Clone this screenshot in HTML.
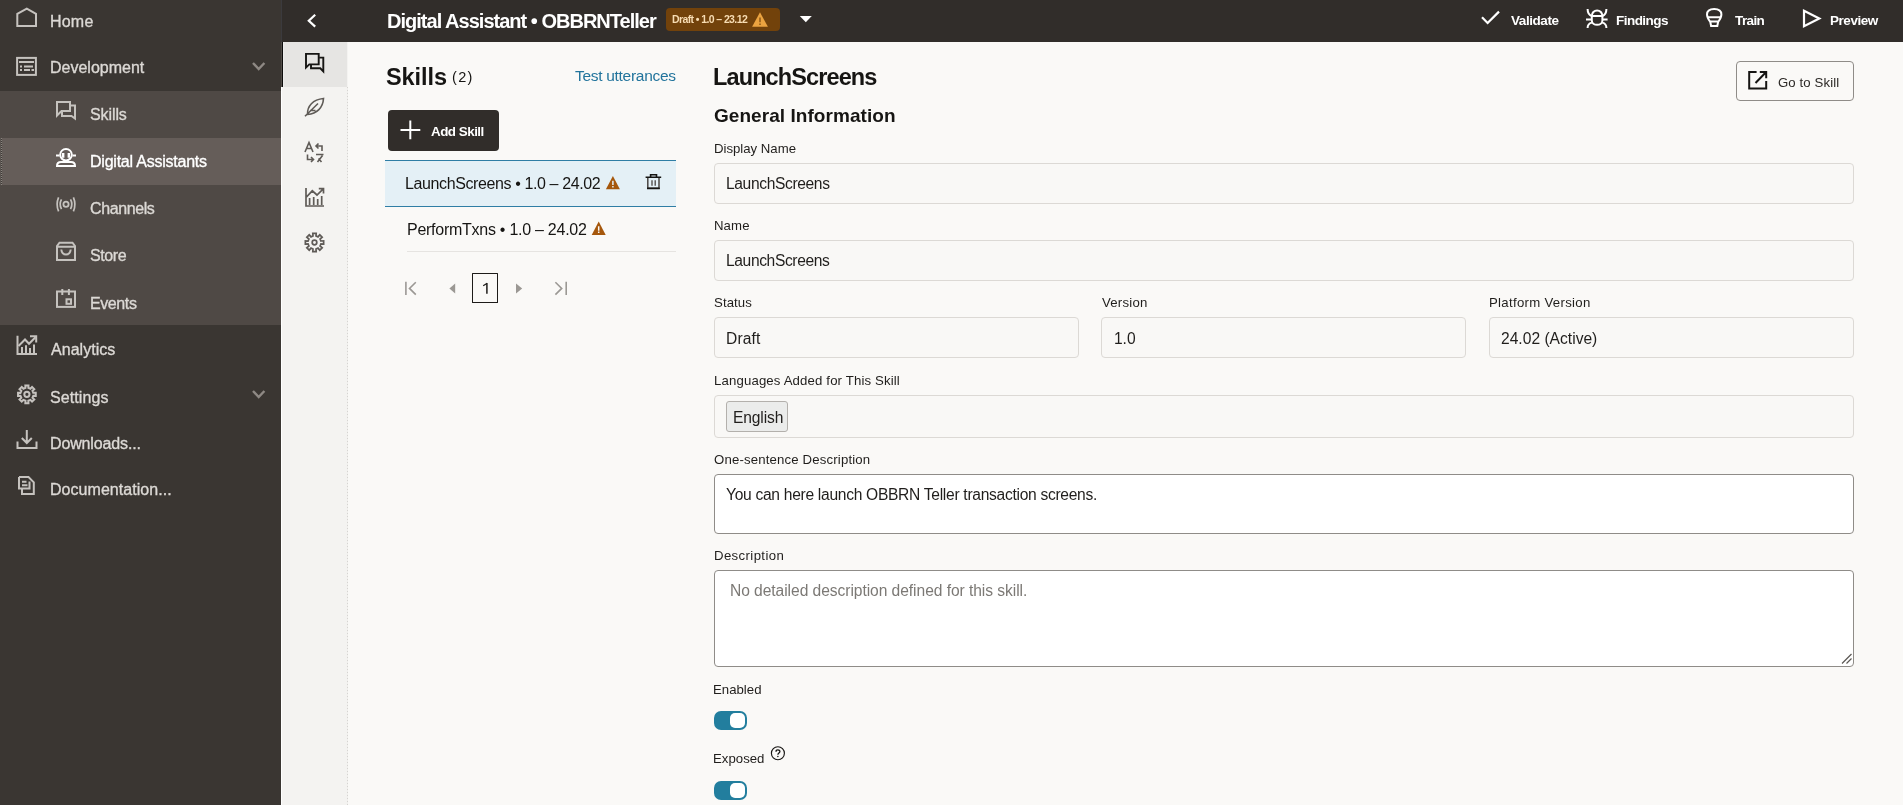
<!DOCTYPE html>
<html><head><meta charset="utf-8"><title>Digital Assistant</title><style>
*{box-sizing:border-box;margin:0;padding:0}
html,body{width:1903px;height:805px;overflow:hidden;background:#faf9f7;font-family:"Liberation Sans",sans-serif}
.b{position:absolute}
.t{position:absolute;line-height:1;white-space:nowrap;font-family:"Liberation Sans",sans-serif;will-change:transform}
.inp{position:absolute;border:1px solid #dcd9d5;border-radius:4px;background:#f9f8f6}
.ta{position:absolute;border:1px solid #8f8c88;border-radius:4px;background:#ffffff}
.tog{position:absolute;width:33px;height:19px;border-radius:7px;background:#227e9e}
.tog i{position:absolute;left:16.2px;top:2.2px;width:15.2px;height:15.2px;border-radius:5px;background:#fff}
</style></head>
<body>

<div class="b" style="left:0;top:0;width:281px;height:805px;background:#3a3632"></div>
<div class="b" style="left:0;top:91px;width:281px;height:234px;background:#4f4945"></div>
<div class="b" style="left:0;top:138px;width:281px;height:47px;background:#655d59"></div><div class="b" style="left:0;top:138px;width:1px;height:47px;background:#5a5450"></div><div class="b" style="left:1px;top:138px;width:1px;height:47px;background:repeating-linear-gradient(to bottom,#8a8580 0 1px,#3e3a36 1px 2px)"></div>
<div class="b" style="left:281px;top:0;width:1622px;height:42px;background:#312d2a"></div>
<div class="b" style="left:281px;top:0;width:1px;height:42px;background:#3b3a3d"></div>
<div class="b" style="left:281px;top:42px;width:67px;height:763px;background:#f4f3f1;border-left:1px solid #ffffff"></div><div class="b" style="left:347px;top:87px;width:1px;height:718px;background:repeating-linear-gradient(to bottom,#d6d4d1 0 1px,#efeeec 1px 3px)"></div>
<div class="b" style="left:281px;top:42px;width:66px;height:45px;background:#e6e5e3;border-left:1px solid #524d49"></div><div class="b" style="left:282px;top:42px;width:1px;height:45px;background:#0e0d0c"></div><div class="b" style="left:283px;top:42px;width:1px;height:45px;background:#ececeb"></div>
<div class="b" style="left:388px;top:110px;width:111px;height:41px;background:#312d2a;border-radius:4px"></div>
<div class="b" style="left:385px;top:160px;width:291px;height:47px;background:#e4f0f6;border-top:1px solid #2f7ea5;border-bottom:1px solid #2f7ea5"></div>
<div class="b" style="left:407px;top:251px;width:269px;height:1px;background:#e6e4e1"></div>
<div class="b" style="left:472px;top:273px;width:26px;height:30px;border:1.3px solid #1d1b19;border-radius:0.5px"></div>
<div class="b" style="left:666px;top:8px;width:114px;height:23px;background:#72420b;border-radius:4px"></div>
<div class="b" style="left:1736px;top:61px;width:118px;height:40px;border:1px solid #8f8c88;border-radius:4px"></div>
<div class="inp" style="left:714px;top:163px;width:1140px;height:41px"></div>
<div class="inp" style="left:714px;top:240px;width:1140px;height:41px"></div>
<div class="inp" style="left:714px;top:317px;width:365px;height:41px"></div>
<div class="inp" style="left:1101px;top:317px;width:365px;height:41px"></div>
<div class="inp" style="left:1489px;top:317px;width:365px;height:41px"></div>
<div class="inp" style="left:714px;top:395px;width:1140px;height:43px"></div>
<div class="b" style="left:726px;top:401px;width:62px;height:31px;background:#ebeceb;border:1px solid #b3b0ac;border-radius:3px"></div>
<div class="ta" style="left:714px;top:474px;width:1140px;height:60px"></div>
<div class="ta" style="left:714px;top:570px;width:1140px;height:97px"></div>
<div class="tog" style="left:714px;top:710.5px"><i></i></div>
<div class="tog" style="left:714px;top:780.8px"><i></i></div>

<svg style="position:absolute;left:10px;top:3px;width:32px;height:30px;overflow:visible" viewBox="10 3 32 30"><path fill="none" stroke="#c5c2be" stroke-width="2" d="M17.3 26 V13.8 L26.8 8.6 L36 13.8 V26 Z" stroke-linejoin="miter"/></svg>
<svg style="position:absolute;left:10px;top:50px;width:32px;height:32px;overflow:visible" viewBox="10 50 32 32"><rect fill="none" stroke="#c5c2be" stroke-width="2" x="17.1" y="57.9" width="18.8" height="17"/><path fill="none" stroke="#c5c2be" stroke-width="2" d="M19 62 H34"/><path fill="none" stroke="#c5c2be" stroke-width="2" d="M20 66.5 H22 M24 66.5 H33 M20 70 H22 M24 70 H30 M31.5 70 H34"/></svg>
<svg style="position:absolute;left:50px;top:95px;width:32px;height:32px;overflow:visible" viewBox="50 95 32 32"><path fill="none" stroke="#c5c2be" stroke-width="2" d="M57 102 H70 V111 H61.5 L57 115.5 Z"/><path fill="none" stroke="#c5c2be" stroke-width="2" d="M70.5 105.5 H75 V118.5 L71.5 116 H62 V111.5"/></svg>
<svg style="position:absolute;left:50px;top:140px;width:32px;height:32px;overflow:visible" viewBox="50 140 32 32"><circle fill="none" stroke="#ffffff" stroke-width="2" cx="66" cy="154.7" r="5.8"/><path fill="none" stroke="#ffffff" stroke-width="2" d="M56 155.5 H59.5 M72.5 155.5 H76"/><path stroke="#ffffff" stroke-width="2.4" d="M63.2 152.9 V157.7 M68.8 152.9 V157.7"/><path fill="none" stroke="#ffffff" stroke-width="2" d="M57 166 C57 162.5 59 162 61 162 H71 C73 162 75 162.5 75 166 Z"/></svg>
<svg style="position:absolute;left:50px;top:190px;width:32px;height:30px;overflow:visible" viewBox="50 190 32 30"><circle fill="none" stroke="#c5c2be" stroke-width="1.8" cx="66" cy="204.3" r="2.6"/><path fill="none" stroke="#c5c2be" stroke-width="1.7" d="M61.5 199.4 Q58.8 204.3 61.5 209.2 M70.5 199.4 Q73.2 204.3 70.5 209.2 M58.6 197.3 Q55.6 204.3 58.6 211.3 M73.4 197.3 Q76.4 204.3 73.4 211.3"/></svg>
<svg style="position:absolute;left:50px;top:237px;width:32px;height:30px;overflow:visible" viewBox="50 237 32 30"><path fill="none" stroke="#c5c2be" stroke-width="2" d="M57 246.8 H75 M57 260 V246 L59.5 242.7 H72.5 L75 246 V260 Z"/><path fill="none" stroke="#c5c2be" stroke-width="2" d="M61.3 249.5 Q61.8 254.5 66 254.5 Q70.2 254.5 70.7 249.5"/></svg>
<svg style="position:absolute;left:50px;top:284px;width:32px;height:30px;overflow:visible" viewBox="50 284 32 30"><rect fill="none" stroke="#c5c2be" stroke-width="2" x="57" y="291.5" width="18" height="15.4"/><path fill="none" stroke="#c5c2be" stroke-width="2" d="M62.3 289 V295 M68.9 289 V295"/><rect fill="none" stroke="#c5c2be" stroke-width="2" x="66.5" y="299.3" width="4.5" height="4.5"/></svg>
<svg style="position:absolute;left:10px;top:331px;width:32px;height:30px;overflow:visible" viewBox="10 331 32 30"><path fill="none" stroke="#c5c2be" stroke-width="2" d="M17.5 335.8 V354 H37"/><path fill="none" stroke="#c5c2be" stroke-width="2" d="M18.5 346 L25 339.5 L29 343.8 L35.5 337.3"/><path fill="none" stroke="#c5c2be" stroke-width="2" d="M30 336.3 H36.2 V342.5"/><path fill="none" stroke="#c5c2be" stroke-width="2" d="M22 347 V353 M26 345.2 V353 M30 348 V353 M34 344.5 V353"/></svg>
<svg style="position:absolute;left:10px;top:379px;width:32px;height:30px;overflow:visible" viewBox="10 379 32 30"><path fill="none" stroke="#c5c2be" stroke-width="2" stroke-linejoin="miter" d="M33.34 392.87 L35.76 392.74 L35.76 395.86 L33.34 395.73 L32.47 397.85 L34.27 399.46 L32.06 401.67 L30.45 399.87 L28.33 400.74 L28.46 403.16 L25.34 403.16 L25.47 400.74 L23.35 399.87 L21.74 401.67 L19.53 399.46 L21.33 397.85 L20.46 395.73 L18.04 395.86 L18.04 392.74 L20.46 392.87 L21.33 390.75 L19.53 389.14 L21.74 386.93 L23.35 388.73 L25.47 387.86 L25.34 385.44 L28.46 385.44 L28.33 387.86 L30.45 388.73 L32.06 386.93 L34.27 389.14 L32.47 390.75 Z"/><circle fill="none" stroke="#c5c2be" stroke-width="2" cx="26.9" cy="394.3" r="2.6"/></svg>
<svg style="position:absolute;left:10px;top:425px;width:32px;height:30px;overflow:visible" viewBox="10 425 32 30"><path fill="none" stroke="#c5c2be" stroke-width="2" d="M26.8 430 V443 M21.8 438 L26.8 443 L31.8 438"/><path fill="none" stroke="#c5c2be" stroke-width="2" d="M17.5 441.5 V448 H36.5 V441.5"/></svg>
<svg style="position:absolute;left:10px;top:470px;width:32px;height:30px;overflow:visible" viewBox="10 470 32 30"><path fill="none" stroke="#c5c2be" stroke-width="2" d="M19 477 H28.5 L33.8 482.3 V494 H22 V489.5 M19 477 V488.5 H29.5 V481.5"/><path fill="none" stroke="#c5c2be" stroke-width="2" d="M22 481.8 H26.5 M22 485.3 H27.5" stroke-width="1.7"/></svg>
<svg style="position:absolute;left:248px;top:58px;width:20px;height:16px;overflow:visible" viewBox="248 58 20 16"><path fill="none" stroke="#8e8984" stroke-width="2.4" d="M253 63 L258.7 69 L264.4 63"/></svg>
<svg style="position:absolute;left:248px;top:386px;width:20px;height:16px;overflow:visible" viewBox="248 386 20 16"><path fill="none" stroke="#8e8984" stroke-width="2.4" d="M253 391 L258.7 397 L264.4 391"/></svg>
<svg style="position:absolute;left:300px;top:10px;width:20px;height:22px;overflow:visible" viewBox="300 10 20 22"><path fill="none" stroke="#ffffff" stroke-width="2.2" d="M315.2 14.8 L308.8 20.7 L315.2 26.6"/></svg>
<svg style="position:absolute;left:660px;top:5px;width:160px;height:32px;overflow:visible" viewBox="660 5 160 32"><path fill="#eba340" d="M760 12.3 L767.9 26.8 H752.1 Z"/><path stroke="#6b3c06" stroke-width="1.1" d="M760 17.5 V22.3 M760 23.5 V24.9"/><path fill="#ffffff" d="M799.8 16 H811.8 L805.8 22.3 Z"/></svg>
<svg style="position:absolute;left:1476px;top:6px;width:30px;height:24px;overflow:visible" viewBox="1476 6 30 24"><path fill="none" stroke="#ffffff" stroke-width="2.2" d="M1482 17.3 L1487.6 23 L1499 11.6"/></svg>
<svg style="position:absolute;left:1580px;top:5px;width:32px;height:28px;overflow:visible" viewBox="1580 5 32 28"><path fill="none" stroke="#ffffff" stroke-width="2" stroke-width="2.3" d="M1591.8 16 A5.3 5.6 0 0 1 1602.4 16 Z M1591.8 16 V20.5 C1591.8 26.3 1602.4 26.3 1602.4 20.5 V16"/><path fill="none" stroke="#ffffff" stroke-width="2" stroke-width="2.2" d="M1587.6 9 C1587.6 13 1589 15 1591.8 16.2 M1606.4 9 C1606.4 13 1605 15 1602.4 16.2 M1586 19.6 H1591.6 M1602.6 19.6 H1607.6 M1587.6 28 C1587.6 24.8 1589 23.3 1591.9 22.6 M1606.4 28 C1606.4 24.8 1605 23.3 1602.3 22.6"/></svg>
<svg style="position:absolute;left:1700px;top:4px;width:30px;height:28px;overflow:visible" viewBox="1700 4 30 28"><path fill="none" stroke="#ffffff" stroke-width="2" stroke-width="2.2" d="M1710.3 22 C1708 19 1707 17 1707 14.5 C1707 10.5 1710 8.9 1714.2 8.9 C1718.4 8.9 1721.4 10.5 1721.4 14.5 C1721.4 17 1720.4 19 1718.1 22 L1717.3 26 H1711.1 Z M1708.5 17.3 H1719.9 M1710.3 21.6 H1718.1"/></svg>
<svg style="position:absolute;left:1798px;top:5px;width:28px;height:28px;overflow:visible" viewBox="1798 5 28 28"><path fill="none" stroke="#ffffff" stroke-width="2.2" stroke-linejoin="miter" d="M1804 10.8 L1819.3 18.5 L1804 26.2 Z"/></svg>
<svg style="position:absolute;left:300px;top:48px;width:30px;height:30px;overflow:visible" viewBox="300 48 30 30"><path fill="none" stroke="#161513" stroke-width="1.9" d="M306 53.9 H318.7 V64.4 H309.3 L306 67.6 Z"/><path fill="none" stroke="#161513" stroke-width="1.9" d="M319.2 57.6 H323.3 V71.4 L320.3 68.3 H311 V64.8"/></svg>
<svg style="position:absolute;left:300px;top:92px;width:30px;height:30px;overflow:visible" viewBox="300 92 30 30"><path fill="none" stroke="#5f5b57" stroke-width="1.6" d="M307.5 114.5 C307 106 313 99.5 323.5 98.5 C323 107.5 317 113.8 307.5 114.5 Z M305 116.3 L318 103.5 M310 110.5 L315.5 110.5"/></svg>
<svg style="position:absolute;left:300px;top:138px;width:30px;height:30px;overflow:visible" viewBox="300 138 30 30"><path fill="none" stroke="#5f5b57" stroke-width="1.6" d="M305 152 L309 142.5 L313 152 M306.5 148.5 H311.5 M322 151 V146 H316 M318.5 143.5 L316 146 L318.5 148.5 M307.5 154.5 V159.5 H313.5 M311 157 L313.5 159.5 L311 162 M316 154.5 H323.5 M317.5 162 L322.5 155.5 M321.5 162 L318.5 158.5"/></svg>
<svg style="position:absolute;left:300px;top:183px;width:30px;height:30px;overflow:visible" viewBox="300 183 30 30"><path fill="none" stroke="#5f5b57" stroke-width="1.7" d="M306 188 V206 H324 M306 197.5 L312.3 190.8 L317 195 L323 189.2 M318.8 188.6 H323.5 V193.5 M309.6 198 V205 M313.7 197 V205 M317.7 199 V205 M321.7 196 V205"/></svg>
<svg style="position:absolute;left:300px;top:228px;width:30px;height:30px;overflow:visible" viewBox="300 228 30 30"><path fill="none" stroke="#5f5b57" stroke-width="1.7" stroke-linejoin="miter" d="M320.93 241.00 L323.64 240.81 L323.64 244.19 L320.93 244.00 L320.10 245.99 L322.16 247.77 L319.77 250.16 L317.99 248.10 L316.00 248.93 L316.19 251.64 L312.81 251.64 L313.00 248.93 L311.01 248.10 L309.23 250.16 L306.84 247.77 L308.90 245.99 L308.07 244.00 L305.36 244.19 L305.36 240.81 L308.07 241.00 L308.90 239.01 L306.84 237.23 L309.23 234.84 L311.01 236.90 L313.00 236.07 L312.81 233.36 L316.19 233.36 L316.00 236.07 L317.99 236.90 L319.77 234.84 L322.16 237.23 L320.10 239.01 Z"/><circle fill="none" stroke="#5f5b57" stroke-width="1.7" cx="314.5" cy="242.5" r="2.3"/></svg>
<svg style="position:absolute;left:396px;top:116px;width:28px;height:28px;overflow:visible" viewBox="396 116 28 28"><path stroke="#ffffff" stroke-width="2" d="M410.3 120.4 V139.3 M400.5 129.9 H420.3"/></svg>
<svg style="position:absolute;left:600px;top:170px;width:24px;height:24px;overflow:visible" viewBox="600 170 24 24"><path fill="#a5570c" d="M612.9 175.9 L619.9 189.3 H605.9 Z"/><path stroke="#e4f0f6" stroke-width="1.5" d="M612.9 180.70000000000002 V185.1 M612.9 186.0 V187.5"/></svg>
<svg style="position:absolute;left:586px;top:216px;width:24px;height:24px;overflow:visible" viewBox="586 216 24 24"><path fill="#a5570c" d="M598.7 221.5 L605.7 234.9 H591.7 Z"/><path stroke="#faf9f7" stroke-width="1.5" d="M598.7 226.3 V230.7 M598.7 231.6 V233.1"/></svg>
<svg style="position:absolute;left:640px;top:170px;width:26px;height:24px;overflow:visible" viewBox="640 170 26 24"><path fill="none" stroke="#161513" stroke-width="1.6" d="M650.6 177.2 V174.8 H656.5 V177.2 M645.6 177.3 H661.2"/><path fill="none" stroke="#4a4643" stroke-width="1.5" d="M647.8 178 V188.3 H659 V178"/><path stroke="#161513" stroke-width="1.7" d="M647 188.4 H659.8"/><path stroke="#4a4643" stroke-width="1.3" d="M652 180.2 V185.8 M655.2 180.2 V185.8"/></svg>
<svg style="position:absolute;left:400px;top:276px;width:22px;height:24px;overflow:visible" viewBox="400 276 22 24"><path stroke="#9b9894" stroke-width="1.6" fill="none" d="M405.9 281.8 V295 M415.8 282.3 L409.5 288.4 L415.8 294.6"/></svg>
<svg style="position:absolute;left:445px;top:278px;width:14px;height:20px;overflow:visible" viewBox="445 278 14 20"><path fill="#9b9894" d="M455.2 283.4 V293.4 L449.4 288.4 Z"/></svg>
<svg style="position:absolute;left:511px;top:278px;width:14px;height:20px;overflow:visible" viewBox="511 278 14 20"><path fill="#9b9894" d="M516 283.4 V293.4 L522.2 288.4 Z"/></svg>
<svg style="position:absolute;left:550px;top:276px;width:22px;height:24px;overflow:visible" viewBox="550 276 22 24"><path stroke="#9b9894" stroke-width="1.6" fill="none" d="M566.2 281.8 V295 M555.4 282.3 L561.7 288.4 L555.4 294.6"/></svg>
<svg style="position:absolute;left:478px;top:280px;width:14px;height:16px;overflow:visible" viewBox="478 280 14 16"><path fill="none" stroke="#1d1b19" stroke-width="1.5" d="M486.9 283.2 V293.8"/><path fill="none" stroke="#1d1b19" stroke-width="1.3" d="M483.2 285.8 L487.2 283.3"/></svg>
<svg style="position:absolute;left:1744px;top:66px;width:28px;height:28px;overflow:visible" viewBox="1744 66 28 28"><path fill="none" stroke="#161513" stroke-width="2" stroke-linejoin="miter" d="M1756.6 72 H1749.2 V88.6 H1766.2 V81 M1759.8 72 H1766.2 V78.3 M1755.5 83 L1765.7 72.5"/></svg>
<svg style="position:absolute;left:766px;top:742px;width:24px;height:22px;overflow:visible" viewBox="766 742 24 22"><circle fill="none" stroke="#161513" stroke-width="1.15" cx="777.9" cy="753.2" r="6.5"/><path fill="none" stroke="#161513" stroke-width="1.3" d="M776 751.7 C776 749.4 779.9 749.4 779.9 751.6 C779.9 753.1 777.9 753.1 777.9 754.8"/><circle fill="#161513" cx="777.9" cy="756.5" r="0.75"/></svg>
<svg style="position:absolute;left:1836px;top:648px;width:20px;height:20px;overflow:visible" viewBox="1836 648 20 20"><path stroke="#5c5854" stroke-width="1.2" d="M1851.5 654 L1842 663.5 M1851.5 658.5 L1846.5 663.5"/></svg>
<div class="t" id="home" style="left:50.40px;top:14.00px;font-size:16.00px;font-weight:400;color:#dcd9d5;letter-spacing:0.200px;-webkit-text-stroke:0.35px currentColor">Home</div>
<div class="t" id="dev" style="left:50.00px;top:60.00px;font-size:16.00px;font-weight:400;color:#dcd9d5;letter-spacing:0.000px;-webkit-text-stroke:0.35px currentColor">Development</div>
<div class="t" id="skills" style="left:89.70px;top:107.00px;font-size:16.00px;font-weight:400;color:#dcd9d5;letter-spacing:-0.100px;-webkit-text-stroke:0.35px currentColor">Skills</div>
<div class="t" id="da" style="left:89.80px;top:154.00px;font-size:16.00px;font-weight:400;color:#ffffff;letter-spacing:-0.229px;-webkit-text-stroke:0.35px currentColor">Digital Assistants</div>
<div class="t" id="chan" style="left:89.80px;top:201.00px;font-size:16.00px;font-weight:400;color:#dcd9d5;letter-spacing:-0.400px;-webkit-text-stroke:0.35px currentColor">Channels</div>
<div class="t" id="store" style="left:89.80px;top:248.00px;font-size:16.00px;font-weight:400;color:#dcd9d5;letter-spacing:-0.400px;-webkit-text-stroke:0.35px currentColor">Store</div>
<div class="t" id="events" style="left:89.80px;top:296.00px;font-size:16.00px;font-weight:400;color:#dcd9d5;letter-spacing:-0.400px;-webkit-text-stroke:0.35px currentColor">Events</div>
<div class="t" id="analytics" style="left:50.70px;top:342.00px;font-size:16.00px;font-weight:400;color:#dcd9d5;letter-spacing:0.037px;-webkit-text-stroke:0.35px currentColor">Analytics</div>
<div class="t" id="settings" style="left:49.70px;top:390.00px;font-size:16.00px;font-weight:400;color:#dcd9d5;letter-spacing:0.100px;-webkit-text-stroke:0.35px currentColor">Settings</div>
<div class="t" id="downloads" style="left:49.70px;top:436.00px;font-size:16.00px;font-weight:400;color:#dcd9d5;letter-spacing:-0.136px;-webkit-text-stroke:0.35px currentColor">Downloads...</div>
<div class="t" id="docs" style="left:49.70px;top:482.00px;font-size:16.00px;font-weight:400;color:#dcd9d5;letter-spacing:0.047px;-webkit-text-stroke:0.35px currentColor">Documentation...</div>
<div class="t" id="title" style="left:387.00px;top:11.00px;font-size:20.00px;font-weight:700;color:#ffffff;letter-spacing:-0.983px;">Digital Assistant • OBBRNTeller</div>
<div class="t" id="badge" style="left:671.80px;top:14.00px;font-size:10.50px;font-weight:700;color:#f7dcb3;letter-spacing:-0.600px;">Draft • 1.0 – 23.12</div>
<div class="t" id="validate" style="left:1510.80px;top:14.00px;font-size:13.50px;font-weight:700;color:#ffffff;letter-spacing:-0.429px;">Validate</div>
<div class="t" id="findings" style="left:1616.30px;top:14.00px;font-size:13.50px;font-weight:700;color:#ffffff;letter-spacing:-0.529px;">Findings</div>
<div class="t" id="train" style="left:1734.80px;top:14.00px;font-size:13.50px;font-weight:700;color:#ffffff;letter-spacing:-0.600px;">Train</div>
<div class="t" id="preview" style="left:1829.50px;top:14.00px;font-size:13.50px;font-weight:700;color:#ffffff;letter-spacing:-0.450px;">Preview</div>
<div class="t" id="skh" style="left:385.50px;top:66.00px;font-size:23.50px;font-weight:700;color:#161513;letter-spacing:-0.060px;">Skills</div>
<div class="t" id="cnt" style="left:452.30px;top:70.00px;font-size:14.50px;font-weight:400;color:#161513;letter-spacing:1.350px;">(2)</div>
<div class="t" id="test" style="left:574.70px;top:68.00px;font-size:15.50px;font-weight:400;color:#22749c;letter-spacing:-0.293px;">Test utterances</div>
<div class="t" id="addskill" style="left:431.00px;top:125.00px;font-size:13.40px;font-weight:700;color:#ffffff;letter-spacing:-0.500px;">Add Skill</div>
<div class="t" id="ls" style="left:405.00px;top:176.00px;font-size:16.00px;font-weight:400;color:#161513;letter-spacing:-0.388px;">LaunchScreens • 1.0 – 24.02</div>
<div class="t" id="pt" style="left:406.90px;top:222.00px;font-size:16.00px;font-weight:400;color:#161513;letter-spacing:-0.262px;">PerformTxns • 1.0 – 24.02</div>
<div class="t" id="h1" style="left:712.60px;top:66.00px;font-size:23.50px;font-weight:700;color:#161513;letter-spacing:-0.883px;">LaunchScreens</div>
<div class="t" id="h2" style="left:713.60px;top:106.00px;font-size:19.00px;font-weight:700;color:#161513;letter-spacing:0.056px;">General Information</div>
<div class="t" id="l_dn" style="left:713.60px;top:142.00px;font-size:13.20px;font-weight:400;color:#201e1c;letter-spacing:-0.009px;">Display Name</div>
<div class="t" id="v_dn" style="left:725.60px;top:176.00px;font-size:15.60px;font-weight:400;color:#201e1c;letter-spacing:-0.367px;">LaunchScreens</div>
<div class="t" id="l_n" style="left:713.60px;top:219.00px;font-size:13.20px;font-weight:400;color:#201e1c;letter-spacing:0.100px;">Name</div>
<div class="t" id="v_n" style="left:725.60px;top:253.00px;font-size:15.60px;font-weight:400;color:#201e1c;letter-spacing:-0.375px;">LaunchScreens</div>
<div class="t" id="l_st" style="left:713.60px;top:296.00px;font-size:13.20px;font-weight:400;color:#201e1c;letter-spacing:0.100px;">Status</div>
<div class="t" id="l_ver" style="left:1101.90px;top:296.00px;font-size:13.20px;font-weight:400;color:#201e1c;letter-spacing:0.233px;">Version</div>
<div class="t" id="l_pv" style="left:1488.70px;top:296.00px;font-size:13.20px;font-weight:400;color:#201e1c;letter-spacing:0.300px;">Platform Version</div>
<div class="t" id="v_st" style="left:725.50px;top:331.00px;font-size:15.60px;font-weight:400;color:#201e1c;letter-spacing:0.125px;">Draft</div>
<div class="t" id="v_ver" style="left:1114.40px;top:331.00px;font-size:15.60px;font-weight:400;color:#201e1c;letter-spacing:-0.050px;">1.0</div>
<div class="t" id="v_pv" style="left:1501.20px;top:331.00px;font-size:15.60px;font-weight:400;color:#201e1c;letter-spacing:0.008px;">24.02 (Active)</div>
<div class="t" id="l_lang" style="left:713.60px;top:374.00px;font-size:13.20px;font-weight:400;color:#201e1c;letter-spacing:0.145px;">Languages Added for This Skill</div>
<div class="t" id="v_lang" style="left:733.20px;top:410.00px;font-size:15.60px;font-weight:400;color:#201e1c;letter-spacing:-0.133px;">English</div>
<div class="t" id="l_one" style="left:713.60px;top:453.00px;font-size:13.20px;font-weight:400;color:#201e1c;letter-spacing:0.161px;">One-sentence Description</div>
<div class="t" id="v_one" style="left:725.70px;top:487.00px;font-size:15.60px;font-weight:400;color:#201e1c;letter-spacing:-0.294px;">You can here launch OBBRN Teller transaction screens.</div>
<div class="t" id="l_desc" style="left:713.50px;top:549.00px;font-size:13.20px;font-weight:400;color:#201e1c;letter-spacing:0.380px;">Description</div>
<div class="t" id="v_desc" style="left:729.70px;top:583.00px;font-size:15.60px;font-weight:400;color:#7c7975;letter-spacing:-0.057px;">No detailed description defined for this skill.</div>
<div class="t" id="l_en" style="left:713.40px;top:683.00px;font-size:13.20px;font-weight:400;color:#201e1c;letter-spacing:0.017px;">Enabled</div>
<div class="t" id="l_ex" style="left:713.40px;top:752.00px;font-size:13.20px;font-weight:400;color:#201e1c;letter-spacing:0.017px;">Exposed</div>
<div class="t" id="goto" style="left:1777.70px;top:76.00px;font-size:13.20px;font-weight:400;color:#2c2926;letter-spacing:0.110px;">Go to Skill</div>
</body></html>
